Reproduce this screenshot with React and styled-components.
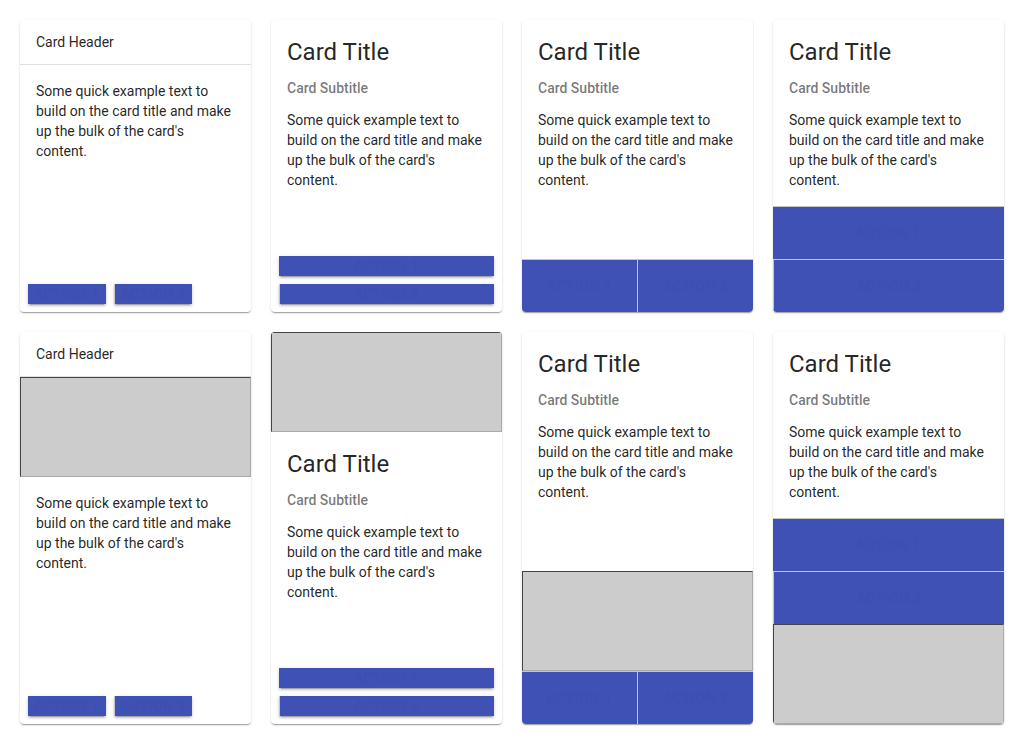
import React from "react";
import styled, { createGlobalStyle, css } from "styled-components";

const GlobalStyle = createGlobalStyle`
  body {
    margin: 0;
    background: #ffffff;
    font-family: Roboto, "Liberation Sans", sans-serif;
    -webkit-font-smoothing: antialiased;
  }
`;

const Grid = styled.div`
  display: grid;
  grid-template-columns: repeat(4, 1fr);
  gap: 20px;
  padding: 20px;
  align-items: stretch;
`;

const Card = styled.div`
  display: flex;
  flex-direction: column;
  background: #fff;
  border-radius: 4px;
  overflow: hidden;
  box-shadow: 0 2px 1px -1px rgba(0, 0, 0, 0.2), 0 1px 1px 0 rgba(0, 0, 0, 0.14),
    0 1px 3px 0 rgba(0, 0, 0, 0.12);
`;

const Header = styled.div`
  height: 44px;
  display: flex;
  align-items: center;
  padding: 0 16px;
  font-size: 14px;
  color: rgba(0, 0, 0, 0.87);
  border-bottom: 1px solid #e0e0e0;
`;

const Media = styled.div`
  box-sizing: border-box;
  height: 100px;
  flex: none;
  background: #cccccc;
  border-style: solid;
  border-width: 1px;
  border-color: #444 #aaa #aaa #444;
`;

const Content = styled.div`
  flex: ${(p) => (p.$grow ? "1 1 auto" : "none")};
`;

const Primary = styled.div`
  padding: 16px 16px 0;
`;

const Title = styled.div`
  font-size: 24px;
  line-height: 32px;
  font-weight: 400;
  color: rgba(0, 0, 0, 0.87);
`;

const Subtitle = styled.div`
  margin-top: 10px;
  font-size: 14px;
  line-height: 20px;
  font-weight: 500;
  color: rgba(0, 0, 0, 0.54);
`;

const Body = styled.div`
  padding: ${(p) => (p.$afterTitle ? "12px 16px 16px" : "16px")};
  font-size: 14px;
  line-height: 20px;
  color: rgba(0, 0, 0, 0.87);
`;

const Actions = styled.div`
  display: flex;
  flex: none;
  ${(p) =>
    p.$layout === "row" &&
    css`
      padding: 8px;
      gap: 8px;
    `}
  ${(p) =>
    p.$layout === "stack" &&
    css`
      padding: 8px;
      gap: 8px;
      flex-direction: column;
    `}
  ${(p) => p.$layout === "bleedStack" && css`flex-direction: column;`}
`;

const raised = css`
  box-shadow: 0 3px 1px -2px rgba(0, 0, 0, 0.2), 0 2px 2px 0 rgba(0, 0, 0, 0.14),
    0 1px 5px 0 rgba(0, 0, 0, 0.12);
`;

const Button = styled.button`
  appearance: none;
  margin: 0;
  border: none;
  background: #3f51b5;
  color: #3d4fb3;
  font-family: Roboto, "Liberation Sans", sans-serif;
  font-size: 14px;
  font-weight: 500;
  letter-spacing: 0.5px;
  text-transform: uppercase;
  padding: 0;
  cursor: pointer;
  flex: none;
  ${(p) =>
    p.$variant === "compact" &&
    css`
      height: 20px;
      width: 78px;
      line-height: 20px;
      ${raised}
    `}
  ${(p) =>
    p.$variant === "full" &&
    css`
      height: 20px;
      width: 100%;
      line-height: 20px;
      ${raised}
    `}
  ${(p) =>
    p.$variant === "bleed" &&
    css`
      flex: 1 1 0;
      height: 53px;
      border-top: 1px solid #c6c6c6;
      & + & {
        border-left: 1px solid #c6c6c6;
      }
    `}
  ${(p) =>
    p.$variant === "bleedStack" &&
    css`
      height: 53px;
      width: 100%;
      border-top: 1px solid #c6c6c6;
    `}
`;

const text =
  "Some quick example text to build on the card title and make up the bulk of the card's content.";

const variants = {
  row: "compact",
  stack: "full",
  bleedRow: "bleed",
  bleedStack: "bleedStack",
};

const ActionSet = ({ layout }) => (
  <Actions $layout={layout}>
    <Button $variant={variants[layout]}>Action 1</Button>
    <Button $variant={variants[layout]}>Action 2</Button>
  </Actions>
);

const TitledContent = ({ grow }) => (
  <Content $grow={grow}>
    <Primary>
      <Title>Card Title</Title>
      <Subtitle>Card Subtitle</Subtitle>
    </Primary>
    <Body $afterTitle>{text}</Body>
  </Content>
);

const App = () => (
  <>
    <GlobalStyle />
    <Grid>
      <Card>
        <Header>Card Header</Header>
        <Content $grow>
          <Body>{text}</Body>
        </Content>
        <ActionSet layout="row" />
      </Card>
      <Card>
        <TitledContent grow />
        <ActionSet layout="stack" />
      </Card>
      <Card>
        <TitledContent grow />
        <ActionSet layout="bleedRow" />
      </Card>
      <Card>
        <TitledContent grow />
        <ActionSet layout="bleedStack" />
      </Card>

      <Card>
        <Header>Card Header</Header>
        <Media />
        <Content $grow>
          <Body>{text}</Body>
        </Content>
        <ActionSet layout="row" />
      </Card>
      <Card>
        <Media />
        <TitledContent grow />
        <ActionSet layout="stack" />
      </Card>
      <Card>
        <TitledContent grow />
        <Media />
        <ActionSet layout="bleedRow" />
      </Card>
      <Card>
        <TitledContent grow />
        <ActionSet layout="bleedStack" />
        <Media />
      </Card>
    </Grid>
  </>
);

export default App;
